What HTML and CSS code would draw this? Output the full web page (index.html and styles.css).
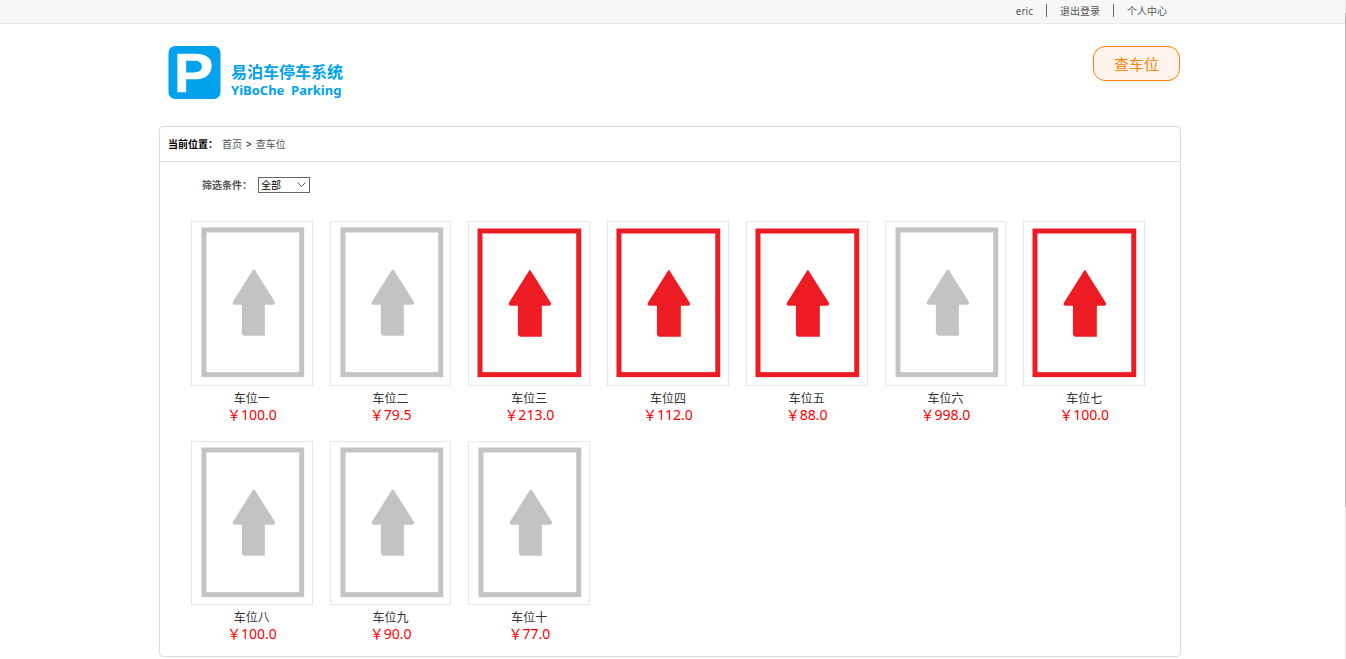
FILE: index.html
```html
<!DOCTYPE html>
<html lang="zh-CN">

<head>
    <meta charset="UTF-8">
    <meta name="viewport" content="width=device-width, initial-scale=1.0">
    <title>查车位</title>
    <link rel="stylesheet" href="styles.css">
</head>

<body>
    <nav class="topbar">
        <div class="wrap topbar-links">
            <a href="#">eric</a>
            <a href="#">退出登录</a>
            <a href="#">个人中心</a>
        </div>
    </nav>

    <header class="wrap header">
        <a class="logo" href="#">
            <svg class="logo-mark" viewBox="0 0 53 54" aria-hidden="true">
                <rect width="53" height="54" rx="7" fill="#00a2ed"/>
                <path fill="#fff" fill-rule="evenodd" d="M9 8H27C38 8 44 12 44 20C44 29 37 34 27 34H18V47H9ZM18 15V27H26C31 27 34 25 34 21C34 17 31 15 26 15Z"/>
            </svg>
            <span class="logo-text">
                <span class="logo-cn">易泊车停车系统</span>
                <span class="logo-en">YiBoChe&nbsp; Parking</span>
            </span>
        </a>
        <button type="button" class="find-btn">查车位</button>
    </header>

    <main class="wrap">
        <div class="panel">
            <div class="crumbs">
                <b>当前位置：</b>
                <a href="#">首页</a>
                <span>&gt;</span>
                <a href="#">查车位</a>
            </div>

            <form class="filter">
                <label for="status">筛选条件：</label>
                <span class="select-box">
                    <select id="status" name="status">
                        <option>全部</option>
                        <option>空闲</option>
                        <option>占用</option>
                    </select>
                    <svg class="chevron" viewBox="0 0 9 6" aria-hidden="true"><path d="M0.5 0.5L4.5 4.5L8.5 0.5" fill="none" stroke="#555"/></svg>
                </span>
            </form>

            <ul class="spots" id="spots"></ul>
        </div>
    </main>

    <div class="scrollbar"></div>

    <script>
        var spots = [
            { name: '车位一', price: '100.0', used: false },
            { name: '车位二', price: '79.5', used: false },
            { name: '车位三', price: '213.0', used: true },
            { name: '车位四', price: '112.0', used: true },
            { name: '车位五', price: '88.0', used: true },
            { name: '车位六', price: '998.0', used: false },
            { name: '车位七', price: '100.0', used: true },
            { name: '车位八', price: '100.0', used: false },
            { name: '车位九', price: '90.0', used: false },
            { name: '车位十', price: '77.0', used: false }
        ];

        var freeIcon = '<rect x="12" y="8" width="98" height="145"/>' +
            '<path d="M61 48Q62 47 63 48L83 80Q84 83 81 83H73V114H52L50 112V83H43Q40 83 41 80Z"/>';
        var usedIcon = '<rect x="11" y="9" width="99" height="144"/>' +
            '<path d="M60 49Q61 47 62 49L82 81Q83 84 80 84H73V115H51L49 113V84H42Q39 84 40 81Z"/>';

        var html = '';
        for (var i = 0; i < spots.length; i++) {
            var s = spots[i];
            html += '<li class="spot">' +
                '<a class="spot-pic ' + (s.used ? 'used' : 'free') + '" href="#" aria-label="' + s.name + '">' +
                '<svg viewBox="0 0 120 163">' + (s.used ? usedIcon : freeIcon) + '</svg></a>' +
                '<a class="spot-name" href="#">' + s.name + '</a>' +
                '<span class="spot-price">￥' + s.price + '</span></li>';
        }
        document.getElementById('spots').innerHTML = html;
    </script>
</body>

</html>
```

FILE: styles.css
```css
* {
    box-sizing: border-box;
}

body {
    margin: 0;
    background: #fff;
    color: #000;
    font: 10px/16px "Noto Sans", "Noto Sans CJK SC", sans-serif;
}

a {
    color: #555;
    text-decoration: none;
}

.wrap {
    max-width: 1028px;
    margin: 0 auto;
    padding-right: 6px;
}

/* top bar */
.topbar {
    background: #f7f7f7;
    border-bottom: 1px solid #eaeaea;
}

.topbar-links {
    display: flex;
    justify-content: flex-end;
    padding: 4px 7px 6px 0;
}

.topbar-links a {
    padding: 2px 13px 0;
    line-height: 11px;
    border-left: 1px solid #666;
}

.topbar-links a:first-child {
    border-left: 0;
}

/* header */
.header {
    display: flex;
    justify-content: space-between;
    align-items: flex-start;
    padding: 22px 7px 27px 9px;
}

.logo {
    display: flex;
    gap: 10px;
    color: #00a2ed;
}

.logo-mark {
    width: 53px;
    height: 53px;
}

.logo-text {
    display: flex;
    flex-direction: column;
    padding-top: 16px;
    font-weight: bold;
}

.logo-cn {
    font-size: 16px;
    line-height: 20px;
}

.logo-en {
    font-size: 13px;
    line-height: 16px;
}

.find-btn {
    width: 87px;
    height: 35px;
    padding: 0;
    color: #ff8000;
    background: #fff3ed;
    border: 1px solid #ff8000;
    border-radius: 12px;
    font: 15px/20px "Noto Sans CJK SC", sans-serif;
}

/* content panel */
.panel {
    border: 1px solid #dcdcdc;
    border-radius: 4px;
}

.crumbs {
    display: flex;
    gap: 4px;
    padding: 9px 8px;
    border-bottom: 1px solid #e0e0e0;
}

.filter {
    display: flex;
    gap: 6px;
    padding: 15px 42px 28px;
    color: #555;
    font-weight: bold;
}

.select-box {
    position: relative;
}

.select-box select {
    display: block;
    appearance: none;
    width: 52px;
    height: 16px;
    padding: 0 2px;
    color: #000;
    background: #fff;
    border: 1px solid #666;
    border-radius: 0;
    font: 10px/14px "Noto Sans CJK SC", sans-serif;
}

.chevron {
    position: absolute;
    top: 5px;
    right: 4px;
    width: 9px;
    height: 6px;
    pointer-events: none;
}

/* parking spots */
.spots {
    display: grid;
    grid-template-columns: repeat(7, 1fr);
    gap: 18px 17px;
    margin: 0;
    padding: 0 35px 14px 31px;
    list-style: none;
}

.spot {
    display: flex;
    flex-direction: column;
    text-align: center;
}

.spot-pic {
    margin-bottom: 5px;
    border: 1px solid #dfe9ee;
}

.spot-pic svg {
    display: block;
    width: 100%;
    fill: currentColor;
}

.spot-pic rect {
    fill: none;
    stroke: currentColor;
    stroke-width: 5px;
}

.free {
    color: #c3c3c3;
}

.used {
    color: #ed1c24;
}

.spot-name {
    color: #333;
    font-size: 12px;
    line-height: 16px;
}

.spot-price {
    color: #f00;
    font-size: 14px;
    line-height: 16px;
}

/* thin page scrollbar */
.scrollbar {
    position: fixed;
    top: 0;
    right: 0;
    width: 1px;
    height: 100%;
    background: linear-gradient(#e6e6e6 0 2%, #b8b8b8 2% 77%, #e6e6e6 77%);
}
```
